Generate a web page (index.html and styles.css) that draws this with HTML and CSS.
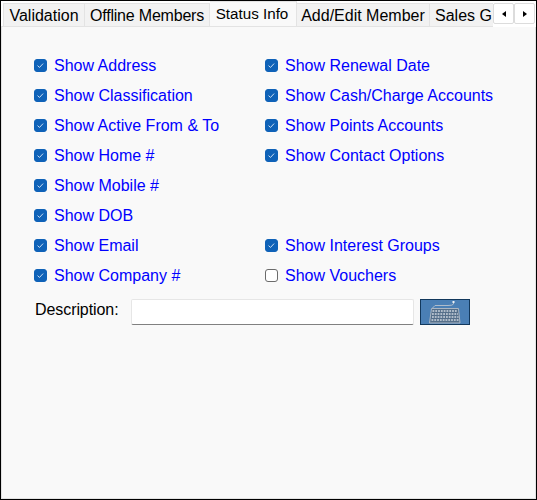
FILE: index.html
```html
<!DOCTYPE html>
<html lang="en">
<head>
<meta charset="UTF-8">
<title>Status Info</title>
<link rel="stylesheet" href="styles.css">
</head>
<body>
<div class="window">
    <div class="tabbar">
        <div class="tabs">
            <div class="tab tab-validation">Validation</div>
            <div class="tab tab-offline">Offline Members</div>
            <div class="tab tab-active">Status Info</div>
            <div class="tab tab-edit">Add/Edit Member</div>
            <div class="tab tab-sales">Sales G</div>
        </div>
        <div class="scroller">
            <div class="scroll-btn"><span class="arrow-left"></span></div>
            <div class="scroll-btn"><span class="arrow-right"></span></div>
        </div>
    </div>
    <div class="panel">
        <div class="options">
            <label class="option"><input type="checkbox" checked><span>Show Address</span></label>
            <label class="option"><input type="checkbox" checked><span>Show Renewal Date</span></label>
            <label class="option"><input type="checkbox" checked><span>Show Classification</span></label>
            <label class="option"><input type="checkbox" checked><span>Show Cash/Charge Accounts</span></label>
            <label class="option"><input type="checkbox" checked><span>Show Active From &amp; To</span></label>
            <label class="option"><input type="checkbox" checked><span>Show Points Accounts</span></label>
            <label class="option"><input type="checkbox" checked><span>Show Home #</span></label>
            <label class="option"><input type="checkbox" checked><span>Show Contact Options</span></label>
            <label class="option"><input type="checkbox" checked><span>Show Mobile #</span></label>
            <div></div>
            <label class="option"><input type="checkbox" checked><span>Show DOB</span></label>
            <div></div>
            <label class="option"><input type="checkbox" checked><span>Show Email</span></label>
            <label class="option"><input type="checkbox" checked><span>Show Interest Groups</span></label>
            <label class="option"><input type="checkbox" checked><span>Show Company #</span></label>
            <label class="option"><input type="checkbox"><span>Show Vouchers</span></label>
        </div>
        <div class="description">
            <label class="description-label">Description:</label>
            <input class="description-input" type="text">
            <button class="keyboard-btn" type="button">
                <svg width="34" height="23" viewBox="0 0 34 23" fill="none">
                    <path d="M25.5 2 V3 Q25 4.5 20 4.5 H7 L4.5 7" stroke="#aebccb" stroke-width="1"/>
                    <rect x="24.5" y="0" width="2" height="2" fill="#eef2f6"/>
                    <path d="M3.5 7.5 H30.5 L32 22 H1.5 Z" fill="#556f8a" stroke="#aab6c3" stroke-width="1"/>
                    <path d="M4.5 10 H29.5 M4 13 H30 M4 16 H30.5 M3.5 19 H30.5" stroke="#cfd7df" stroke-width="1.6" stroke-dasharray="1.8 1"/>
                </svg>
            </button>
        </div>
    </div>
</div>
</body>
</html>
```

FILE: styles.css
```css
html, body {
    margin: 0;
    padding: 0;
}
body {
    font-family: "Liberation Sans", Arial, sans-serif;
    font-size: 16px;
    color: #000;
}
.window {
    box-sizing: border-box;
    width: 537px;
    height: 500px;
    border: 1px solid #000;
    background-color: #f9f9f9;
    display: flex;
    flex-direction: column;
    overflow: hidden;
}
.tabbar {
    height: 26px;
    flex: none;
    display: flex;
    background-color: #fff;
}
.tabs {
    width: 492px;
    flex: none;
    display: flex;
    align-items: flex-end;
    overflow: hidden;
    border-bottom: 1px solid #e3e3e3;
    box-sizing: border-box;
    height: 26px;
}
.tab {
    box-sizing: border-box;
    height: 23px;
    flex: none;
    line-height: 23px;
    text-align: center;
    background-color: #f2f2f2;
    border: 1px solid #e3e3e3;
    border-bottom: none;
    border-left: none;
}
.tab-validation {
    width: 82px;
    border-left: 1px solid #e3e3e3;
    margin-left: 2px;
}
.tab-offline {
    width: 125px;
    letter-spacing: -0.2px;
}
.tab-active {
    width: 87px;
    height: 26px;
    padding-right: 2px;
    font-size: 15.2px;
    line-height: 24px;
    background-color: #f9f9f9;
    position: relative;
    top: 1px;
}
.tab-edit {
    width: 133px;
}
.tab-sales {
    width: 110px;
    padding-left: 5px;
    text-align: left;
}
.scroller {
    display: flex;
    height: 21px;
    margin-top: 2px;
}
.scroll-btn {
    box-sizing: border-box;
    width: 21px;
    height: 21px;
    background-color: #fff;
    border: 1px solid #dcdcdc;
    border-radius: 2px;
    display: flex;
    align-items: center;
    justify-content: center;
}
.arrow-left, .arrow-right {
    width: 0;
    height: 0;
    border-top: 3.5px solid transparent;
    border-bottom: 3.5px solid transparent;
}
.arrow-left {
    border-right: 4px solid #000;
}
.arrow-right {
    border-left: 4px solid #000;
}
.panel {
    flex: 1;
    border: 1px solid #e3e3e3;
    border-top: none;
    padding: 24px 0 0 32px;
}
.options {
    display: grid;
    grid-template-columns: 231px 1fr;
    grid-auto-rows: 30px;
}
.option {
    display: flex;
    align-items: center;
    color: #0000ff;
}
.option input {
    appearance: none;
    box-sizing: border-box;
    width: 13px;
    height: 13px;
    margin: 0 7px 1px 0;
    background-color: #fff;
    border: 1px solid #6b6b6b;
    border-radius: 3px;
    flex: none;
}
.option input:checked {
    border-color: #0f62b8;
    background-color: #0f62b8;
    background-image: url("data:image/svg+xml,%3Csvg xmlns='http://www.w3.org/2000/svg' viewBox='0 0 13 13'%3E%3Cpath d='M3 6.6 L5.3 8.8 L9.6 4.2' fill='none' stroke='%23d5e4f3' stroke-width='1.1'/%3E%3C/svg%3E");
}
.description {
    display: flex;
    align-items: center;
    height: 26px;
    margin-top: 8px;
    padding-left: 1px;
}
.description-label {
    width: 96px;
    flex: none;
    position: relative;
    top: -2px;
    letter-spacing: -0.08px;
}
.description-input {
    box-sizing: border-box;
    width: 283px;
    height: 26px;
    margin: 0;
    background-color: #fff;
    border: 1px solid #e6e6e6;
    border-bottom: 1px solid #808080;
    border-radius: 2px;
}
.keyboard-btn {
    box-sizing: border-box;
    width: 50px;
    height: 26px;
    margin: 0 0 0 6px;
    padding: 0;
    background-color: #4a7fb5;
    border: 1px solid #12385c;
    display: flex;
    align-items: center;
    justify-content: center;
}
```
